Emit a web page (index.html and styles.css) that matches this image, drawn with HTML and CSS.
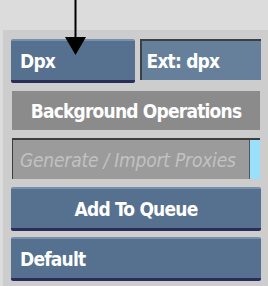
FILE: index.html
```html
<!DOCTYPE html>
<html lang="en">
<head>
    <meta charset="UTF-8">
    <title>Export Options</title>
    <link rel="stylesheet" href="styles.css">
</head>
<body>

    <!-- Pointer arrow over the format button -->
    <svg class="pointer" width="30" height="56" viewBox="0 0 30 56">
        <rect x="9.5" y="0" width="2" height="40" fill="#000"/>
        <polygon points="0,37 21,37 10.5,55" fill="#000"/>
    </svg>

    <div class="panel">
        <div class="row">
            <button class="btn btn-left grow">Dpx</button>
            <div class="field grow">Ext: dpx</div>
        </div>
        <div class="bar">Background Operations</div>
        <div class="field-gray">
            <span class="placeholder">Generate / Import Proxies</span>
            <span class="accent"></span>
        </div>
        <button class="btn">Add To Queue</button>
        <button class="btn btn-left">Default</button>
    </div>

</body>
</html>
```

FILE: styles.css
```css
/* General */
* {
    margin: 0;
    padding: 0;
    box-sizing: border-box;
}

body {
    background-color: #dcdcdc;
    font-family: "DejaVu Sans Condensed", "DejaVu Sans", sans-serif;
    font-weight: bold;
    font-size: 19px;
    letter-spacing: -0.8px;
    color: #fff;
    width: 268px;
    height: 286px;
    overflow: hidden;
    position: relative;
}

.pointer {
    position: absolute;
    left: 65px;
    top: 0;
}

/* Panel */
.panel {
    margin: 30px 0 0 3px;
    height: 256px;
    background-color: #cdcdcd;
    padding: 9px 7px 0 8px;
    display: flex;
    flex-direction: column;
    gap: 6px;
}

.row {
    display: flex;
    gap: 5px;
    align-items: flex-start;
    height: 45px;
}

.grow {
    flex: 1 1 0;
    min-width: 0;
}

/* Buttons */
.btn {
    font: inherit;
    letter-spacing: inherit;
    color: #fff;
    height: 44px;
    background-color: #56708f;
    border: none;
    border-top: 2px solid #7890ac;
    border-bottom: 3px solid #2a2d58;
    border-radius: 2px;
    text-align: center;
    white-space: nowrap;
}

.btn-left {
    text-align: left;
    padding-left: 9px;
}

/* Fields */
.field {
    height: 41px;
    background-color: #667f9a;
    border-top: 2px solid #3a3f48;
    border-left: 2px solid #3a3f48;
    display: flex;
    align-items: center;
    padding-left: 5px;
    white-space: nowrap;
}

.bar {
    margin: 1px 1px 0 1px;
    height: 39px;
    background-color: #8b8b8b;
    display: flex;
    align-items: center;
    justify-content: center;
    white-space: nowrap;
}

.field-gray {
    margin: 2px 1px 2px 1px;
    height: 41px;
    background-color: #9b9b9b;
    border-top: 2px solid #3d3d3d;
    border-left: 1px solid #3d3d3d;
    display: flex;
    align-items: center;
}

.placeholder {
    flex: 1;
    font-style: italic;
    font-weight: normal;
    letter-spacing: -0.2px;
    color: #c2c2c2;
    padding-left: 7px;
    white-space: nowrap;
    overflow: hidden;
}

.accent {
    width: 11px;
    align-self: stretch;
    background-color: #9be0fb;
    border-left: 1px solid #555;
}
```
